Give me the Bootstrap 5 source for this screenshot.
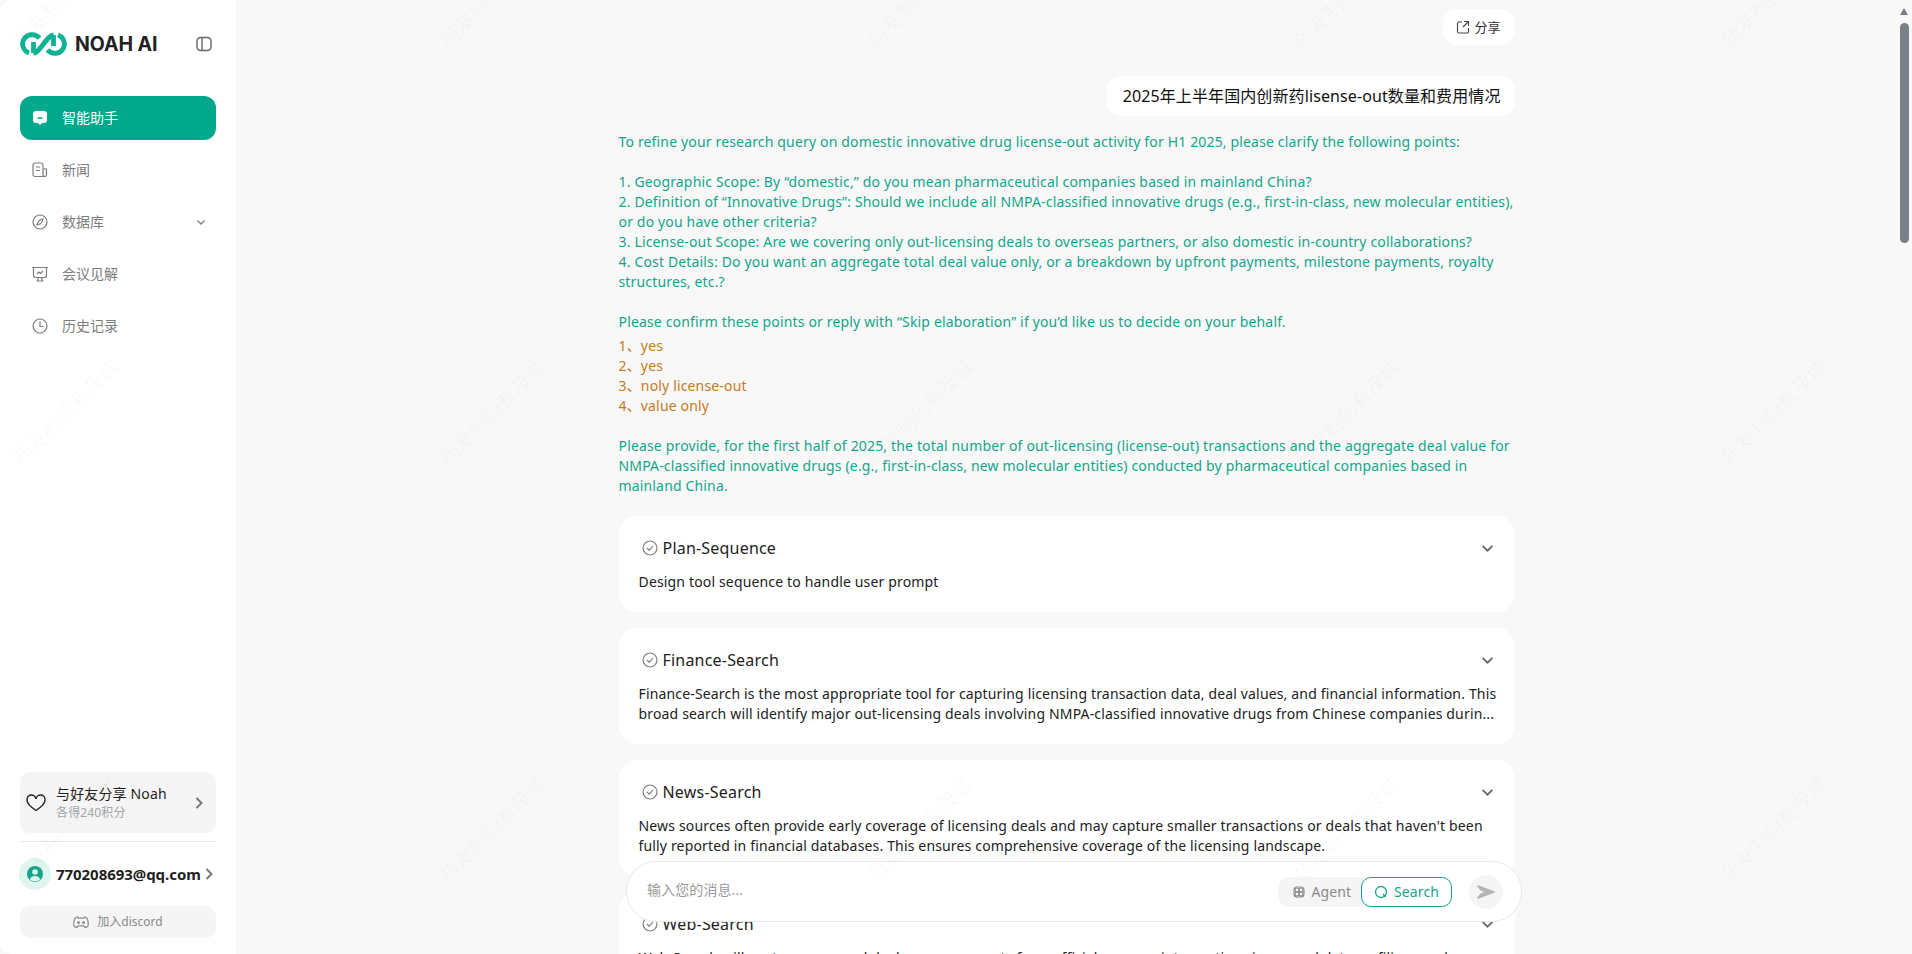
<!DOCTYPE html>
<html lang="zh-CN">
<head>
    <meta charset="UTF-8">
    <meta name="viewport" content="width=device-width, initial-scale=1.0">
    <title>Noah AI</title>
    <link href="https://cdn.jsdelivr.net/npm/bootstrap@5.3.0/dist/css/bootstrap.min.css" rel="stylesheet">
    <style>
        html, body { height: 100%; }
        body { font-family: "Noto Sans", "Noto Sans CJK SC", sans-serif; font-size: 14px; line-height: 20px; background: #f8f8f8; color: #1f1f1f; overflow: hidden; }
        .shell { height: 954px; }
        .side-panel { width: 236px; flex: none; background: #fff; border-radius: 12px 0 0 12px; padding: 0 20px 16px; }
        .brand-row { height: 88px; }
        .brand-name { font-family: Inter, sans-serif; font-weight: 700; font-size: 19.5px; color: #222; margin-left: 8px; letter-spacing: -.05px; }
        .side-link { height: 44px; margin-bottom: 8px; padding-left: 12px; border-radius: 12px; color: #7d7d7d; gap: 14px; text-decoration: none; }
        .side-link.is-on { background: #00a88c; color: #fff; }
        .nav-stack { margin-top: 8px; }
        .invite-box { height: 61px; background: #f5f5f5; border-radius: 10px; padding: 0 12px 0 6px; }
        .invite-text { margin-left: 10px; letter-spacing: .15px; }
        .invite-sub { font-size: 12px; color: #a1a5ab; line-height: 18px; }
        .side-rule { height: 1px; background: #e5e7eb; margin: 8px 0 16px; }
        .avatar-dot { width: 32px; height: 32px; border-radius: 50%; background: #e0f5f0; flex: none; margin-left: -1px; }
        .mail-text { font-weight: 700; font-size: 15px; color: #1f1f1f; margin-left: 5px; letter-spacing: -.05px; white-space: nowrap; }
        .mail-arrow { margin-left: auto; margin-right: 2px; }
        .discord-btn { height: 32px; background: #f5f5f5; border-radius: 10px; color: #8a8a8a; font-size: 12px; margin-top: 16px; gap: 8px; }
        .main-area { overflow: hidden; }
        .thread { width: 896px; margin: 0 auto; letter-spacing: .16px; }
        .share-chip { height: 36px; width: 72px; margin-top: 9px; background: #fff; border-radius: 14px; font-size: 13px; gap: 4px; color: #333; letter-spacing: 0; }
        .ask-bubble { height: 40px; margin-top: 31px; padding: 0 14px 0 16px; background: #fff; border-radius: 14px; font-size: 16px; color: #111; letter-spacing: .1px; }
        .reply-text { margin-top: 16px; color: #14a58b; white-space: nowrap; }
        .reply-user { margin: 4px 0 20px; color: #c9791c; }
        .steps-list { margin-top: 20px; }
        .step-box { background: #fff; border-radius: 18px; padding: 16px 20px 20px; margin-bottom: 16px; }
        .step-head { height: 32px; padding-left: 3px; font-size: 16px; gap: 5px; margin-bottom: 8px; color: #222; letter-spacing: .2px; }
        .step-body { color: #222; white-space: nowrap; }
        .chevron-end { margin-left: auto; margin-right: 1px; }
        .side-chev { margin-left: auto; margin-right: 10px; }
        .composer { position: absolute; left: 626px; top: 861px; width: 896px; height: 61px; background: #fff; border: 1px solid #e8e9eb; border-radius: 30px; padding: 0 18px 0 20px; z-index: 2; color: #9a9a9a; letter-spacing: .1px; }
        .composer-hint { margin-bottom: 3px; }
        .mode-wrap { height: 30px; background: #f5f5f5; border-radius: 10px; color: #8a8a8a; margin-right: 17px; }
        .mode-agent { padding: 0 10px 0 15px; gap: 6px; }
        .mode-search { height: 30px; padding: 0 12px; gap: 6px; border: 1px solid #14a58b; background: #fff; border-radius: 10px; color: #14a58b; }
        .send-dot { width: 34px; height: 34px; border-radius: 50%; background: #f5f5f5; flex: none; }
        .scroll-rail { width: 15px; flex: none; padding: 8px 3px 0 3px; }
        .scroll-arrow { width: 0; height: 0; border-left: 4.5px solid transparent; border-right: 4.5px solid transparent; border-bottom: 7px solid #7b8088; }
        .scroll-thumb { width: 9px; height: 220px; margin-top: 8px; background: #7b8088; border-radius: 5px; }
        .mark-layer { position: absolute; left: 0; top: 0; width: 1912px; height: 954px; overflow: hidden; pointer-events: none; z-index: 5; }
        .mark-item { position: absolute; width: 170px; text-align: center; font-size: 20px; line-height: 28px; color: rgba(0, 0, 0, .03); transform: rotate(-45deg); white-space: nowrap; }
    </style>
</head>
<body>
    <div class="shell d-flex position-relative">
        <!-- Sidebar -->
        <aside class="side-panel d-flex flex-column">
            <div class="brand-row d-flex align-items-center">
                <svg width="47" height="24" viewBox="0 0 47 24" fill="none" stroke="#0db394" stroke-width="4.800">
                    <path d="M19.500 6.300A9.400 9.400 0 1 0 9 20.900"/><path d="M13.500 10V21"/>
                    <path d="M13.500 21C20 21 27 3 33.500 3"/>
                    <path d="M27.500 17.700A9.400 9.400 0 1 0 38 3.100"/><path d="M33.500 3V14"/>
                </svg>
                <span class="brand-name">NOAH AI</span>
                <svg class="ms-auto me-1" width="16" height="16" viewBox="0 0 16 16" fill="none" stroke="#666" stroke-width="1.400"><rect x="1" y="1.500" width="14" height="13" rx="3.500"/><path d="M6 1.500V14.500"/></svg>
            </div>
            <nav class="nav-stack">
                <a class="side-link is-on d-flex align-items-center">
                    <svg width="16" height="16" viewBox="0 0 16 16"><path fill="#fff" d="M4 1h8a3 3 0 0 1 3 3v6a3 3 0 0 1-3 3h-2l-2 2-2-2H4a3 3 0 0 1-3-3V4a3 3 0 0 1 3-3z"/><path stroke="#00a88c" stroke-width="1.500" d="M5.500 8h5"/></svg>
                    <span>智能助手</span>
                </a>
                <a class="side-link d-flex align-items-center">
                    <svg width="16" height="16" viewBox="0 0 16 16" fill="none" stroke="#7d7d7d" stroke-width="1.200"><path d="M13 14.500H3a2 2 0 0 1-2-2V3a2 2 0 0 1 2-2h6a2 2 0 0 1 2 2v9.500a2 2 0 0 0 2 2 1.500 1.500 0 0 0 1.500-1.500V7H11"/><path d="M4 5h4M4 8.500h4"/></svg>
                    <span>新闻</span>
                </a>
                <a class="side-link d-flex align-items-center">
                    <svg width="16" height="16" viewBox="0 0 16 16" fill="none" stroke="#7d7d7d" stroke-width="1.200"><circle cx="8" cy="8" r="7"/><path d="M11 5c-2.500.3-5 2.500-6 6 3-.5 5.500-3 6-6z"/></svg>
                    <span>数据库</span>
                    <svg class="side-chev" width="10" height="10" viewBox="0 0 10 10" fill="none" stroke="#7d7d7d" stroke-width="1.300"><path d="M1.500 3.500L5 7l3.500-3.500"/></svg>
                </a>
                <a class="side-link d-flex align-items-center">
                    <svg width="16" height="16" viewBox="0 0 16 16" fill="none" stroke="#7d7d7d" stroke-width="1.200"><path d="M0 1.500h16M1.500 1.500v8a2 2 0 0 0 2 2h9a2 2 0 0 0 2-2v-8M5.500 15l1-3.500M10.500 15l-1-3.500M4.500 15h7"/><path d="M5 8l2-2 1.500 1.500L11 5"/></svg>
                    <span>会议见解</span>
                </a>
                <a class="side-link d-flex align-items-center">
                    <svg width="16" height="16" viewBox="0 0 16 16" fill="none" stroke="#7d7d7d" stroke-width="1.200"><circle cx="8" cy="8" r="7"/><path d="M8 3.500V8.500H11.500"/></svg>
                    <span>历史记录</span>
                </a>
            </nav>
            <div class="mt-auto">
                <div class="invite-box d-flex align-items-center">
                    <svg width="20" height="18" viewBox="0 0 20 18" fill="none" stroke="#222" stroke-width="1.400"><path d="M10 16.500C4 12.500 1 9.500 1 6a4.500 4.500 0 0 1 9-1 4.500 4.500 0 0 1 9 1c0 3.500-3 6.500-9 10.500z"/></svg>
                    <div class="invite-text flex-grow-1">
                        <div>与好友分享 Noah</div>
                        <div class="invite-sub">各得240积分</div>
                    </div>
                    <svg width="10" height="14" viewBox="0 0 10 14" fill="none" stroke="#777" stroke-width="2"><path d="M2.500 2l5 5-5 5"/></svg>
                </div>
                <div class="side-rule"></div>
                <div class="d-flex align-items-center">
                    <div class="avatar-dot d-flex align-items-center justify-content-center">
                        <svg width="16" height="16" viewBox="0 0 16 16"><circle cx="8" cy="8" r="8" fill="#14a58b"/><circle cx="8" cy="6" r="2.800" fill="#e0f5f0"/><path fill="#e0f5f0" d="M2.800 13.500C3.500 11 5.500 10 8 10s4.500 1 5.200 3.500A8 8 0 0 1 2.800 13.500z"/></svg>
                    </div>
                    <span class="mail-text">770208693@qq.com</span>
                    <svg class="mail-arrow" width="10" height="14" viewBox="0 0 10 14" fill="none" stroke="#777" stroke-width="2"><path d="M2.500 2l5 5-5 5"/></svg>
                </div>
                <div class="discord-btn d-flex align-items-center justify-content-center">
                    <svg width="16" height="14" viewBox="0 0 16 14" fill="none" stroke="#8a8a8a" stroke-width="1.200"><path d="M4.500 2C3 2.300 2.300 2.800 2 3.300.800 5.800.500 8.500 1 11c1 .9 2 1.400 3 1.600l1-1.800h6l1 1.800c1-.2 2-.7 3-1.600.5-2.500.2-5.200-1-7.700C13.700 2.800 13 2.300 11.500 2l-.7 1.200H5.200z"/><circle cx="5.500" cy="7.500" r=".9"/><circle cx="10.500" cy="7.500" r=".9"/></svg>
                    <span>加入discord</span>
                </div>
            </div>
        </aside>

        <!-- Chat -->
        <main class="main-area flex-grow-1">
            <div class="thread">
                <div class="d-flex justify-content-end">
                    <div class="share-chip d-flex align-items-center justify-content-center">
                        <svg width="14" height="14" viewBox="0 0 14 14" fill="none" stroke="#444" stroke-width="1.100"><path d="M6 2H3a1.500 1.500 0 0 0-1.500 1.500v8A1.500 1.500 0 0 0 3 13h8a1.500 1.500 0 0 0 1.500-1.500V8"/><path d="M8 1.500h4.500V6M12.500 1.500L7 7"/></svg>
                        <span>分享</span>
                    </div>
                </div>
                <div class="d-flex justify-content-end">
                    <div class="ask-bubble d-flex align-items-center">2025年上半年国内创新药lisense-out数量和费用情况</div>
                </div>
                <div class="reply-text">
                    To refine your research query on domestic innovative drug license-out activity for H1 2025, please clarify the following points:<br><br>
                    1. Geographic Scope: By “domestic,” do you mean pharmaceutical companies based in mainland China?<br>
                    2. Definition of “Innovative Drugs”: Should we include all NMPA-classified innovative drugs (e.g., first-in-class, new molecular entities),<br>
                    or do you have other criteria?<br>
                    3. License-out Scope: Are we covering only out-licensing deals to overseas partners, or also domestic in-country collaborations?<br>
                    4. Cost Details: Do you want an aggregate total deal value only, or a breakdown by upfront payments, milestone payments, royalty<br>
                    structures, etc.?<br><br>
                    Please confirm these points or reply with “Skip elaboration” if you’d like us to decide on your behalf.
                    <div class="reply-user">1、yes<br>2、yes<br>3、noly license-out<br>4、value only</div>
                    Please provide, for the first half of 2025, the total number of out-licensing (license-out) transactions and the aggregate deal value for<br>
                    NMPA-classified innovative drugs (e.g., first-in-class, new molecular entities) conducted by pharmaceutical companies based in<br>
                    mainland China.
                </div>
                <div id="steps" class="steps-list"></div>
            </div>
        </main>

        <div class="scroll-rail">
            <div class="scroll-arrow"></div>
            <div class="scroll-thumb"></div>
        </div>

        <!-- Composer floats over the thread -->
        <div class="composer d-flex align-items-center">
            <span class="composer-hint">输入您的消息...</span>
            <div class="mode-wrap d-flex align-items-center ms-auto">
                <div class="mode-agent d-flex align-items-center">
                    <svg width="12" height="12" viewBox="0 0 12 12" fill="none" stroke="#8a8a8a" stroke-width="1.100"><rect x="1" y="1" width="10" height="10" rx="3"/><circle cx="4" cy="4" r="2"/><circle cx="8" cy="4" r="2"/><circle cx="4" cy="8" r="2"/><circle cx="8" cy="8" r="2"/></svg>
                    <span>Agent</span>
                </div>
                <div class="mode-search d-flex align-items-center">
                    <svg width="14" height="14" viewBox="0 0 14 14" fill="none" stroke="#14a58b" stroke-width="1.300"><circle cx="7" cy="7" r="5.500"/><path d="M9 9l2.500 3"/></svg>
                    <span>Search</span>
                </div>
            </div>
            <div class="send-dot d-flex align-items-center justify-content-center">
                <svg width="20" height="16" viewBox="0 0 20 16"><path fill="#b5b5b5" stroke="#b5b5b5" stroke-width="1.500" stroke-linejoin="round" d="M2 2L18 8 2 14 4.500 10.500 10 8 4.500 5.500z"/></svg>
            </div>
        </div>

        <div class="mark-layer" id="marks"></div>
    </div>

    <script src="https://cdn.jsdelivr.net/npm/bootstrap@5.3.0/dist/js/bootstrap.bundle.min.js"></script>
    <script>
        const steps = [
            { name: "Plan-Sequence", text: "Design tool sequence to handle user prompt" },
            { name: "Finance-Search", text: "Finance-Search is the most appropriate tool for capturing licensing transaction data, deal values, and financial information. This<br>broad search will identify major out-licensing deals involving NMPA-classified innovative drugs from Chinese companies durin..." },
            { name: "News-Search", text: "News sources often provide early coverage of licensing deals and may capture smaller transactions or deals that haven't been<br>fully reported in financial databases. This ensures comprehensive coverage of the licensing landscape." },
            { name: "Web-Search", text: "Web-Search will capture news and deal announcements from official sources, interpretive pieces, and data on filings and" }
        ];
        const tick = `<svg width="16" height="16" viewBox="0 0 16 16" fill="none" stroke="#777" stroke-width="1.100"><circle cx="8" cy="8" r="7"/><path d="M5 8l2.200 2.200L11 6"/></svg>`;
        const chev = `<svg class="chevron-end" width="13" height="13" viewBox="0 0 12 12" fill="none" stroke="#666" stroke-width="1.600"><path d="M1.500 3.500L6 8l4.500-4.500"/></svg>`;
        document.getElementById("steps").innerHTML = steps.map(s => `
            <div class="step-box">
                <div class="step-head d-flex align-items-center">${tick}<span>${s.name}</span>${chev}</div>
                <div class="step-body">${s.text}</div>
            </div>`).join("");

        // Watermark tiles, repeated over the whole window
        const marks = document.getElementById("marks");
        [-5, 413, 830].forEach(y => {
            [66, 493, 920, 1347, 1774].forEach(x => {
                const m = document.createElement("div");
                m.className = "mark-item";
                m.textContent = "药友制药有茂城";
                m.style.left = (x - 85) + "px";
                m.style.top = (y - 14) + "px";
                marks.appendChild(m);
            });
        });
    </script>
</body>
</html>
